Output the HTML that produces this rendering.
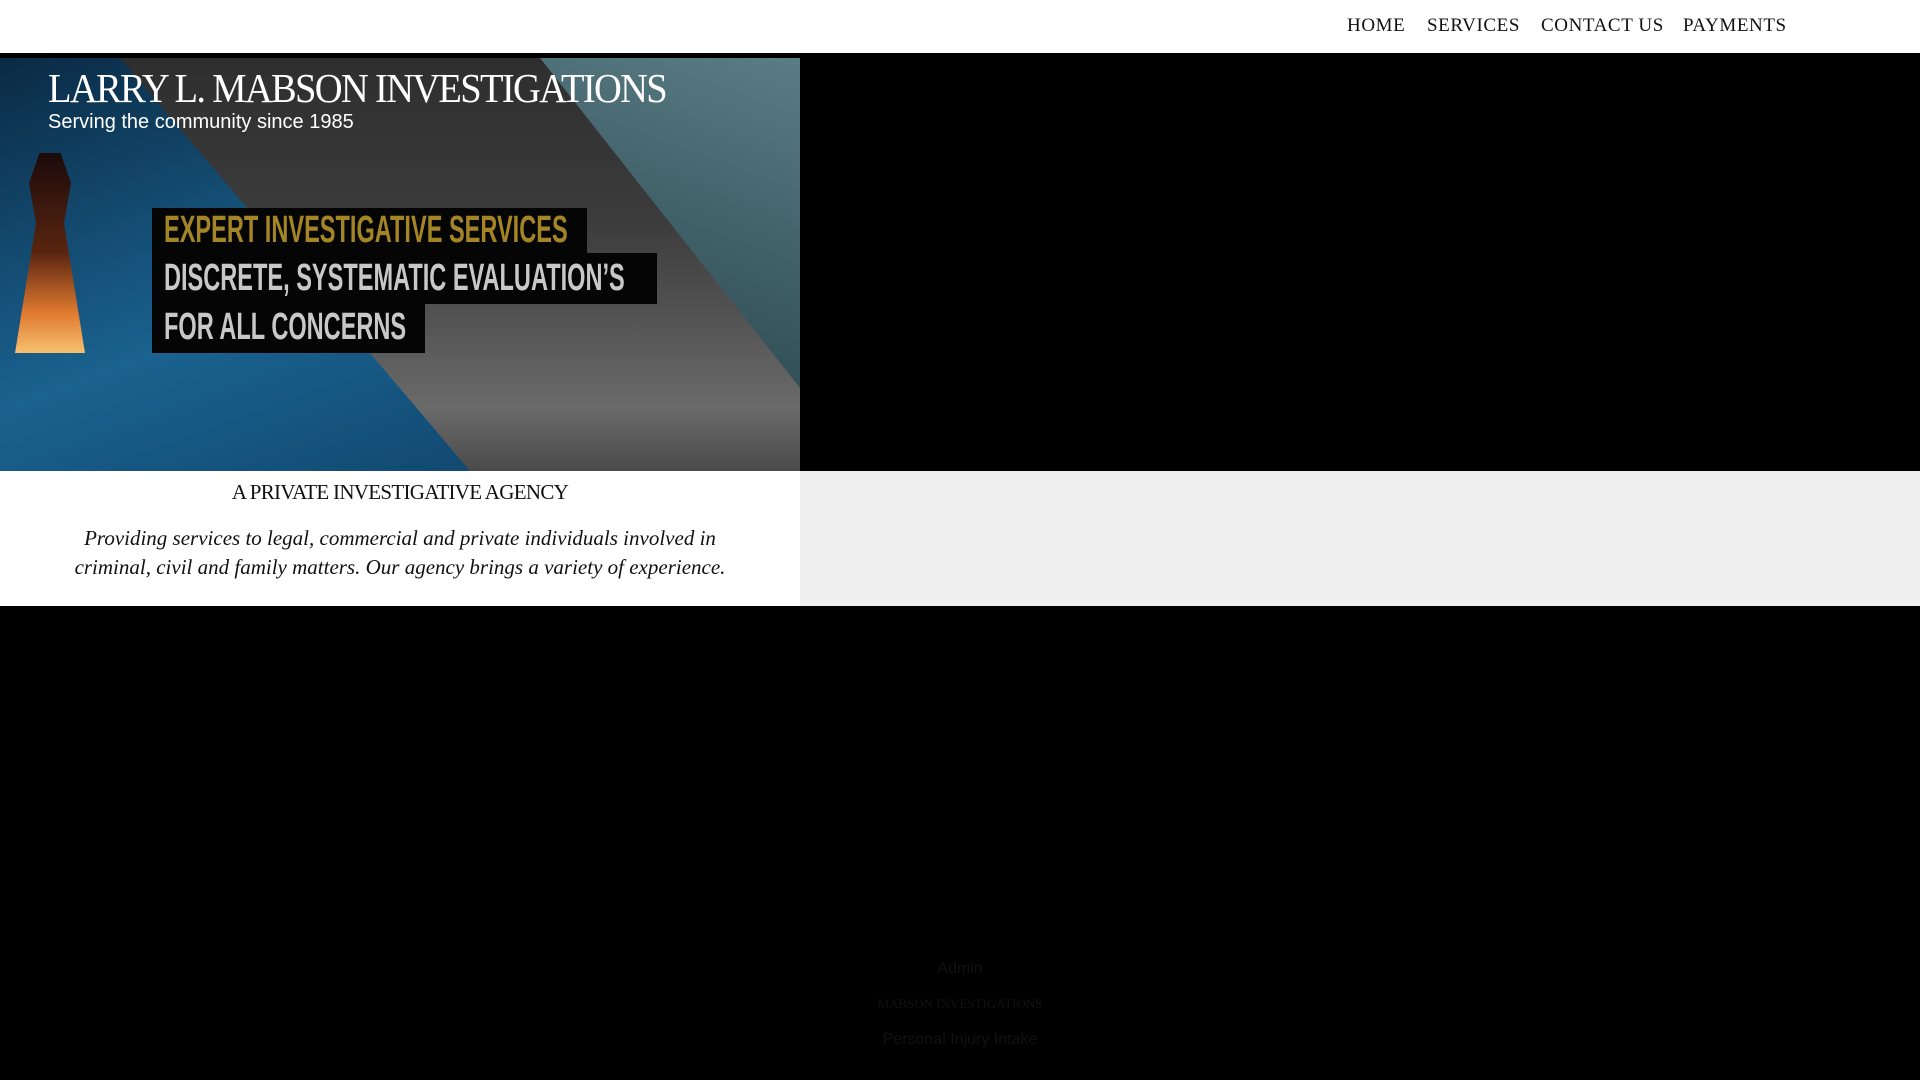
<!DOCTYPE html>
<html><head><meta charset="utf-8"><style>
*{margin:0;padding:0;box-sizing:border-box}
body{width:1920px;height:1080px;background:#000;position:relative;overflow:hidden;font-family:"Liberation Serif",serif}
.hdr{position:absolute;left:0;top:0;width:1920px;height:53px;background:#fff}
.nav a{position:absolute;top:15px;font-size:19px;letter-spacing:0.6px;color:#111;text-decoration:none;white-space:nowrap}
.hero{position:absolute;left:0;top:58px;width:800px;height:413px;overflow:hidden;
background:linear-gradient(180deg,#2e2e2e 0%,#3c3c3c 40%,#6a6a6a 85%,#4a4a4a 100%)}
.blue{position:absolute;left:0;top:0;width:800px;height:413px;background:linear-gradient(160deg,#0a2a44,#1a6290 50%,#0d3c60);clip-path:polygon(0 0,120px 0,470px 413px,0 413px)}
.lap{position:absolute;left:0;top:0;width:800px;height:413px;background:linear-gradient(200deg,#5a7d85,#2f4d55 50%,#17262a);clip-path:polygon(540px 0,800px 0,800px 330px)}
.key{position:absolute;left:15px;top:95px;width:70px;height:200px;background:linear-gradient(180deg,#1a0a0a,#5a2510 50%,#e07a30 80%,#f6c070);clip-path:polygon(35% 0,65% 0,80% 15%,70% 35%,100% 100%,0 100%,30% 35%,20% 15%)}
.t1{position:absolute;left:48px;top:6px;font-size:41px;color:#fff;letter-spacing:-1.8px;white-space:nowrap;transform:scaleX(0.94);transform-origin:left}
.t2{position:absolute;left:48px;top:53px;font-family:"Liberation Sans",sans-serif;font-size:20px;color:#fff;white-space:nowrap}
.box{position:absolute;background:#050505;font-family:"Liberation Sans",sans-serif;font-weight:bold;font-size:38px;line-height:45px;padding-left:12px;white-space:nowrap;color:#c8c8c8}
.box span{display:inline-block;transform:scaleX(0.62);transform-origin:left}
.sec{position:absolute;left:0;top:471px;width:800px;height:135px;background:#fff;text-align:center}
.gray{position:absolute;left:800px;top:471px;width:1120px;height:135px;background:#efefef}
.h2{position:absolute;left:0;width:800px;top:480px;text-align:center;font-size:21px;letter-spacing:-0.7px;color:#111}
.p{position:absolute;left:0;width:800px;top:524px;text-align:center;font-style:italic;font-size:21px;line-height:29px;color:#111}
.f{position:absolute;left:0;width:1920px;text-align:center;color:#111}
</style></head><body>
<div class="hdr"></div>
<div class="nav"><a style="left:1347px">HOME</a><a style="left:1427px">SERVICES</a><a style="left:1541px">CONTACT US</a><a style="left:1683px">PAYMENTS</a></div>
<div class="hero"><div class="blue"></div><div class="lap"></div><div class="key"></div>
<div class="t1">LARRY L. MABSON INVESTIGATIONS</div>
<div class="t2">Serving the community since 1985</div>
<div class="box" style="left:152px;top:150px;width:435px;height:46px;color:#a48526"><span>EXPERT INVESTIGATIVE SERVICES</span></div>
<div class="box" style="left:152px;top:195px;width:505px;height:51px;line-height:51px"><span>DISCRETE, SYSTEMATIC EVALUATION’S</span></div>
<div class="box" style="left:152px;top:245px;width:273px;height:50px;line-height:48px"><span>FOR ALL CONCERNS</span></div>
</div>
<div class="sec"></div><div class="gray"></div>
<div class="h2">A PRIVATE INVESTIGATIVE AGENCY</div>
<div class="p">Providing services to legal, commercial and private individuals involved in<br>criminal, civil and family matters. Our agency brings a variety of experience.</div>
<div class="f" style="top:960px;font-family:'Liberation Sans',sans-serif;font-size:16px">Admin</div>
<div class="f" style="top:996px;font-size:13px">MABSON INVESTIGATIONS</div>
<div class="f" style="top:1031px;font-family:'Liberation Sans',sans-serif;font-size:16px">Personal Injury Intake</div>
</body></html>
